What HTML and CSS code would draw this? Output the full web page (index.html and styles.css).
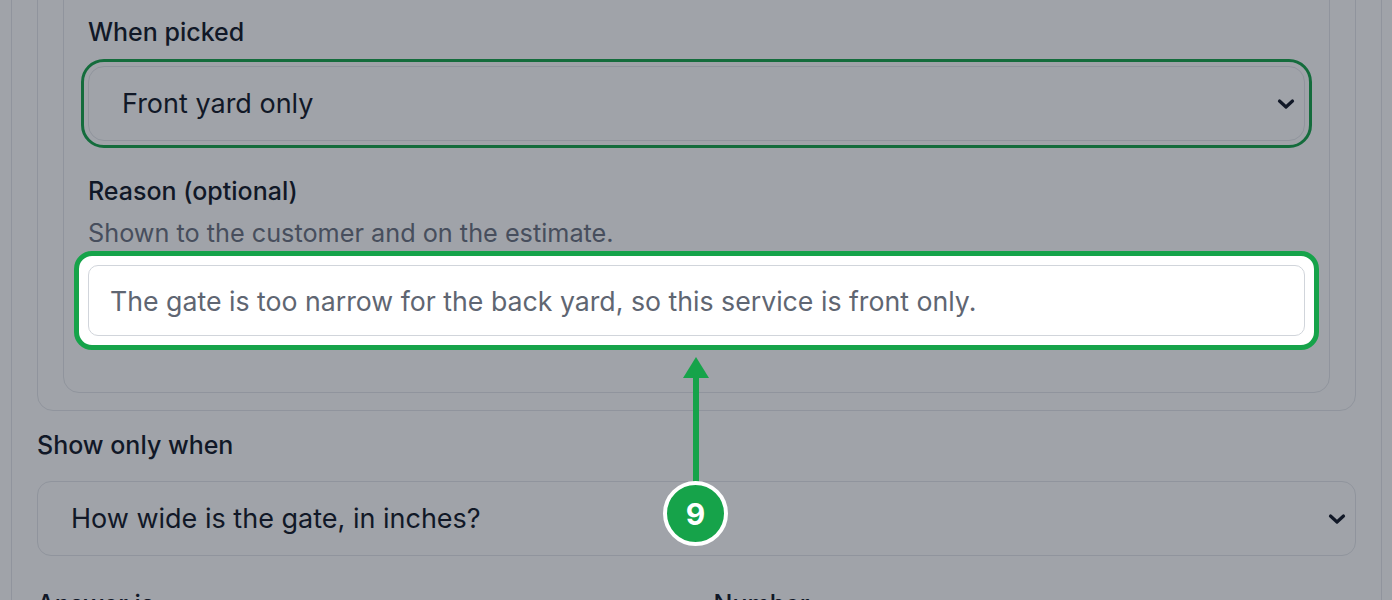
FILE: index.html
```html
<!DOCTYPE html>
<html>
<head>
	<title>Service options</title>
	<link rel="stylesheet" href="styles.css">
</head>
<body>

	<div class="panel">
		<div class="option-box">
			<div class="rule-box">
				<div class="field">
					<label class="label">When picked</label>
					<div class="select focused">
						<span>Front yard only</span>
						<svg class="chev" width="18" height="12" viewBox="0 0 18 12"><path d="M2.5 3 L9 9 L15.5 3" fill="none" stroke="#111827" stroke-width="3.2" stroke-linecap="round" stroke-linejoin="round"/></svg>
					</div>
				</div>
				<div class="field">
					<label class="label">Reason (optional)</label>
					<p class="hint">Shown to the customer and on the estimate.</p>
					<div class="spot">
						<div class="textarea">The gate is too narrow for the back yard, so this service is front only.</div>
					</div>
				</div>
			</div>
		</div>

		<div class="field show-when">
			<label class="label">Show only when</label>
			<div class="select">
				<span>How wide is the gate, in inches?</span>
				<svg class="chev" width="18" height="12" viewBox="0 0 18 12"><path d="M2.5 3 L9 9 L15.5 3" fill="none" stroke="#111827" stroke-width="3.2" stroke-linecap="round" stroke-linejoin="round"/></svg>
			</div>
		</div>

		<div class="row">
			<div class="field"><label class="label">Answer is</label></div>
			<div class="field"><label class="label">Number</label></div>
		</div>
	</div>

	<!-- tour overlay -->
	<div class="dim"></div>

	<svg class="pointer" width="30" height="132" viewBox="0 0 30 132">
		<path d="M15 2 L28 23 L2 23 Z" fill="#16a34a"/>
		<rect x="12" y="20" width="6" height="112" fill="#16a34a"/>
	</svg>
	<div class="step">9</div>

</body>
</html>
```

FILE: styles.css
```css
* {
	box-sizing: border-box;
}
html {
	overflow: hidden;
}
body {
	margin: 0;
	background: #fff;
	font-family: Inter, "Noto Sans", sans-serif;
	color: #111827;
}

.panel {
	margin: -60px 10px 0 11px;
	padding: 20px 25px 0;
	border: 1px solid #e5e7eb;
	border-radius: 16px;
	height: 760px;
}
.option-box {
	border: 1px solid #e5e7eb;
	border-radius: 16px;
	padding: 20px 25px 17px;
}
.rule-box {
	border: 1px solid #e5e7eb;
	border-radius: 16px;
	padding: 34px 24px 56px;
}

.label {
	display: block;
	font-size: 25px;
	line-height: 30px;
	font-weight: 500;
}
.field + .field {
	margin-top: 35px;
}
.hint {
	margin: 12px 0 17px;
	font-size: 25.25px;
	line-height: 30px;
	color: #6b7280;
}

.select {
	margin-top: 19px;
	height: 75px;
	border: 1px solid #e5e7eb;
	border-radius: 14px;
	padding: 0 9px 0 33px;
	display: flex;
	align-items: center;
	justify-content: space-between;
	font-size: 27px;
	color: #111827;
}
.select.focused {
	outline: 3px solid #16a34a;
	outline-offset: 4px;
	border-radius: 16px;
}
.chev {
	display: block;
}

.textarea {
	height: 71px;
	border: 1px solid #d1d5db;
	border-radius: 10px;
	padding: 0 21px;
	display: flex;
	align-items: center;
	font-size: 26.7px;
	color: #5f6672;
	background: #fff;
}

.show-when {
	margin-top: 19px;
}
.show-when .select {
	margin-top: 21px;
}

.row {
	margin-top: 33px;
	display: grid;
	grid-template-columns: 1fr 1fr;
	column-gap: 34px;
}
.row .field + .field {
	margin-top: 0;
}

/* overlay + highlighted control */
.dim {
	position: fixed;
	inset: 0;
	background: rgba(17, 24, 39, 0.4);
	z-index: 1;
}
.spot {
	position: relative;
	z-index: 2;
	margin: -14px -14px;
	padding: 9px;
	border: 5px solid #16a34a;
	border-radius: 18px;
	background: #fff;
}

.pointer {
	position: absolute;
	left: 681px;
	top: 355px;
	z-index: 3;
}
.step {
	position: absolute;
	left: 663px;
	top: 481px;
	width: 65px;
	height: 65px;
	border-radius: 50%;
	border: 4px solid #fff;
	background: #16a34a;
	color: #fff;
	font-size: 30px;
	font-weight: 700;
	display: flex;
	align-items: center;
	justify-content: center;
	z-index: 4;
}
```
